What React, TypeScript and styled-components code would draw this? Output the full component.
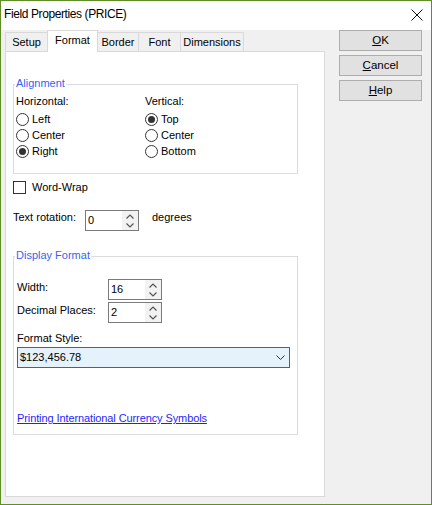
import React from "react";
import styled, { createGlobalStyle } from "styled-components";

const GlobalStyle = createGlobalStyle`
  html, body { margin: 0; padding: 0; background: #ffffff; }
  body { font-family: "Liberation Sans", Arial, sans-serif; font-size: 11px; color: #000; }
  * { box-sizing: border-box; }
`;

const Window = styled.div`
  width: 432px;
  height: 505px;
  border: 1px solid #5e8e24;
  background: #f0f0f0;
  display: flex;
  flex-direction: column;
`;

const TitleBar = styled.div`
  height: 29px;
  background: #ffffff;
  display: flex;
  align-items: center;
  justify-content: space-between;
  padding: 0 8px 0 3px;
`;

const Title = styled.span`
  font-size: 12px;
  letter-spacing: -0.4px;
  line-height: 14px;
  padding-bottom: 4px;
`;

const CloseIcon = styled.svg`
  width: 12px;
  height: 12px;
  margin-bottom: 1px;
`;

const Body = styled.div`
  flex: 1;
  display: flex;
  padding: 0 9px 0 4px;
`;

const LeftCol = styled.div`
  width: 320px;
  display: flex;
  flex-direction: column;
`;

const TabStrip = styled.div`
  display: flex;
  align-items: flex-start;
  height: 21px;
`;

const Tab = styled.div<{ $w: number; $active?: boolean; $first?: boolean }>`
  position: relative;
  width: ${(p) => p.$w}px;
  height: ${(p) => (p.$active ? 22 : 19)}px;
  margin-top: ${(p) => (p.$active ? 0 : 2)}px;
  margin-left: ${(p) => (p.$first ? 0 : -1)}px;
  border: 1px solid #d9d9d9;
  border-bottom: none;
  background: ${(p) => (p.$active ? "#ffffff" : "#f0f0f0")};
  z-index: ${(p) => (p.$active ? 2 : 1)};
  display: flex;
  align-items: center;
  justify-content: center;
  padding-bottom: ${(p) => (p.$active ? 2 : 0)}px;
  font-size: 11px;
  line-height: 13px;
`;

const Page = styled.div`
  height: 446px;
  border: 1px solid #d9d9d9;
  background: #ffffff;
  padding: 32px 0 0 7px;
  display: flex;
  flex-direction: column;
`;

const Group = styled.div<{ $mt?: number }>`
  position: relative;
  width: 285px;
  margin-top: ${(p) => p.$mt ?? 0}px;
  border: 1px solid #dcdcdc;
`;

const Legend = styled.span`
  position: absolute;
  top: -8px;
  left: 1px;
  padding: 0 1px;
  background: #ffffff;
  color: #3a62f2;
  line-height: 13px;
`;

const AlignBody = styled.div`
  padding: 10px 0 14px 2px;
  display: grid;
  grid-template-columns: 129px 1fr;
`;

const Column = styled.div`
  display: flex;
  flex-direction: column;
`;

const Heading = styled.div`
  line-height: 13px;
  margin-bottom: 3px;
`;

const RadioRow = styled.div`
  height: 16px;
  display: flex;
  align-items: center;
  gap: 3px;
  line-height: 13px;
`;

const RadioCircle = styled.span<{ $checked?: boolean }>`
  width: 13px;
  height: 13px;
  border-radius: 50%;
  border: 1px solid #333333;
  background: #ffffff;
  display: flex;
  align-items: center;
  justify-content: center;
  &::after {
    content: "";
    width: 7px;
    height: 7px;
    border-radius: 50%;
    background: ${(p) => (p.$checked ? "#333333" : "transparent")};
  }
`;

const CheckRow = styled.div`
  margin-top: 7px;
  height: 13px;
  display: flex;
  align-items: center;
  gap: 6px;
  line-height: 13px;
`;

const CheckBox = styled.span`
  width: 13px;
  height: 13px;
  border: 1px solid #333333;
  background: #ffffff;
`;

const InlineRow = styled.div<{ $mt?: number }>`
  display: flex;
  align-items: flex-start;
  margin-top: ${(p) => p.$mt ?? 0}px;
`;

const FieldLabel = styled.span<{ $w: number; $pt?: number }>`
  width: ${(p) => p.$w}px;
  padding-top: ${(p) => p.$pt ?? 2}px;
  line-height: 13px;
`;

const Suffix = styled.span`
  margin-left: 13px;
  padding-top: 1px;
  line-height: 13px;
`;

const Spin = styled.div`
  width: 54px;
  height: 21px;
  border: 1px solid #7a7a7a;
  background: #ffffff;
  display: flex;
`;

const SpinValue = styled.span`
  flex: 1;
  padding: 3px 0 0 2px;
  line-height: 13px;
`;

const SpinArrows = styled.div`
  width: 16px;
  background: #f2f2f2;
  display: flex;
  flex-direction: column;
  align-items: center;
  justify-content: space-between;
  padding: 3px 0 2px;
`;

const DisplayBody = styled.div`
  padding: 22px 6px 9px 3px;
  display: flex;
  flex-direction: column;
`;

const RowGap = styled.div`
  display: flex;
  flex-direction: column;
  gap: 2px;
`;

const PlainLabel = styled.div`
  margin-top: 9px;
  line-height: 13px;
`;

const Select = styled.div`
  margin-top: 2px;
  width: 273px;
  height: 21px;
  border: 1px solid #0078d7;
  background: #e5f1fb;
  display: flex;
  align-items: center;
  justify-content: space-between;
  padding: 0 4px 0 2px;
  line-height: 13px;
`;

const Link = styled.a`
  margin-top: 44px;
  line-height: 13px;
  color: #1f1fff;
  text-decoration: underline;
  align-self: flex-start;
  letter-spacing: -0.1px;
`;

const RightCol = styled.div`
  margin-left: 14px;
  display: flex;
  flex-direction: column;
  gap: 4px;
`;

const Button = styled.div`
  width: 83px;
  height: 21px;
  border: 1px solid #adadad;
  background: #e1e1e1;
  display: flex;
  align-items: center;
  justify-content: center;
  line-height: 13px;
  font-size: 11.5px;
  u { text-decoration: underline; }
`;

const SpinUpDown: React.FC = () => (
  <SpinArrows>
    <svg width="8" height="5" viewBox="0 0 8 5">
      <path d="M0.5 4.5 L4 1 L7.5 4.5" fill="none" stroke="#555" strokeWidth="1.2" />
    </svg>
    <svg width="8" height="5" viewBox="0 0 8 5">
      <path d="M0.5 0.5 L4 4 L7.5 0.5" fill="none" stroke="#555" strokeWidth="1.2" />
    </svg>
  </SpinArrows>
);

const Spinner: React.FC<{ value: string }> = ({ value }) => (
  <Spin>
    <SpinValue>{value}</SpinValue>
    <SpinUpDown />
  </Spin>
);

const Radio: React.FC<{ label: string; checked?: boolean }> = ({ label, checked }) => (
  <RadioRow>
    <RadioCircle $checked={checked} />
    <span>{label}</span>
  </RadioRow>
);

const tabs = [
  { label: "Setup", w: 43 },
  { label: "Format", w: 51, active: true },
  { label: "Border", w: 42 },
  { label: "Font", w: 43 },
  { label: "Dimensions", w: 64 },
];

export default function App() {
  return (
    <>
      <GlobalStyle />
      <Window>
        <TitleBar>
          <Title>Field Properties (PRICE)</Title>
          <CloseIcon viewBox="0 0 12 12">
            <path d="M0.5 0.5 L11.5 11.5 M11.5 0.5 L0.5 11.5" stroke="#111" strokeWidth="1" fill="none" />
          </CloseIcon>
        </TitleBar>
        <Body>
          <LeftCol>
            <TabStrip>
              {tabs.map((t, i) => (
                <Tab key={t.label} $w={t.w} $active={t.active} $first={i === 0}>
                  {t.label}
                </Tab>
              ))}
            </TabStrip>
            <Page>
              <Group>
                <Legend>Alignment</Legend>
                <AlignBody>
                  <Column>
                    <Heading>Horizontal:</Heading>
                    <Radio label="Left" />
                    <Radio label="Center" />
                    <Radio label="Right" checked />
                  </Column>
                  <Column>
                    <Heading>Vertical:</Heading>
                    <Radio label="Top" checked />
                    <Radio label="Center" />
                    <Radio label="Bottom" />
                  </Column>
                </AlignBody>
              </Group>

              <CheckRow>
                <CheckBox />
                <span>Word-Wrap</span>
              </CheckRow>

              <InlineRow $mt={16}>
                <FieldLabel $w={72} $pt={1}>Text rotation:</FieldLabel>
                <Spinner value="0" />
                <Suffix>degrees</Suffix>
              </InlineRow>

              <Group $mt={25}>
                <Legend>Display Format</Legend>
                <DisplayBody>
                  <RowGap>
                    <InlineRow>
                      <FieldLabel $w={91}>Width:</FieldLabel>
                      <Spinner value="16" />
                    </InlineRow>
                    <InlineRow>
                      <FieldLabel $w={91}>Decimal Places:</FieldLabel>
                      <Spinner value="2" />
                    </InlineRow>
                  </RowGap>
                  <PlainLabel>Format Style:</PlainLabel>
                  <Select>
                    <span>$123,456.78</span>
                    <svg width="9" height="5" viewBox="0 0 9 5">
                      <path d="M0.5 0.5 L4.5 4.5 L8.5 0.5" fill="none" stroke="#333" strokeWidth="1" />
                    </svg>
                  </Select>
                  <Link>Printing International Currency Symbols</Link>
                </DisplayBody>
              </Group>
            </Page>
          </LeftCol>
          <RightCol>
            <Button><span><u>O</u>K</span></Button>
            <Button><span><u>C</u>ancel</span></Button>
            <Button><span><u>H</u>elp</span></Button>
          </RightCol>
        </Body>
      </Window>
    </>
  );
}
